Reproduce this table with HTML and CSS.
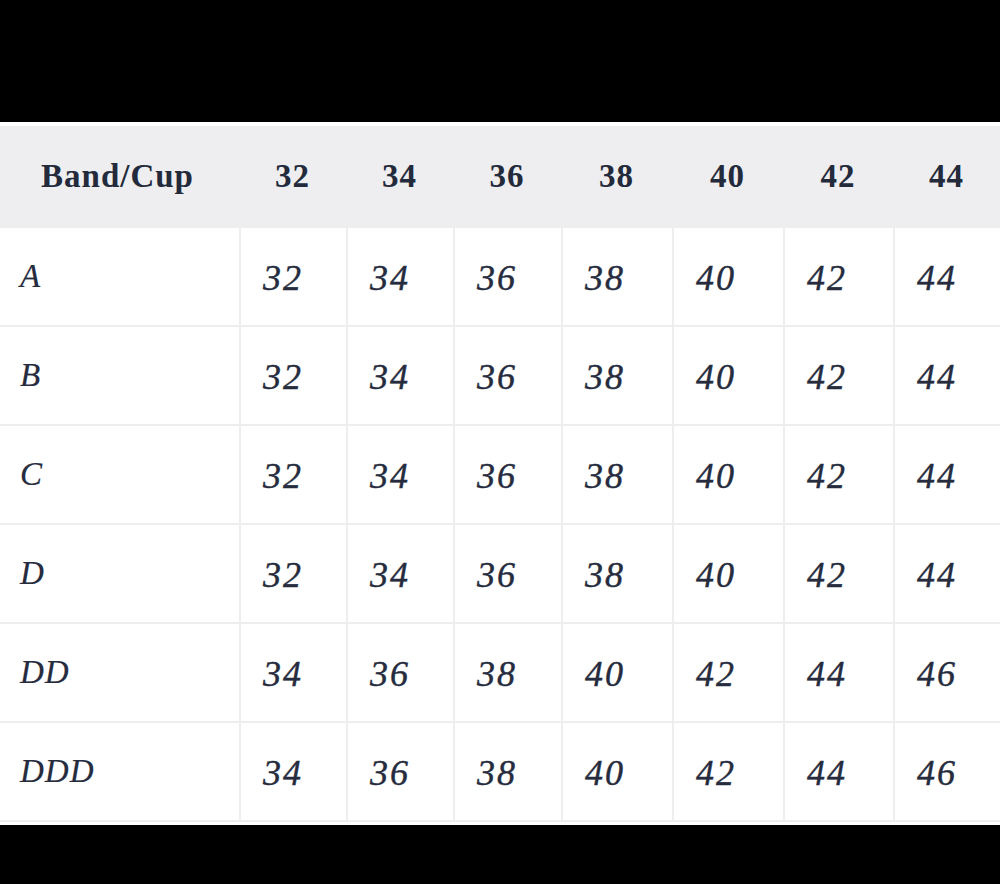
FILE: index.html
```html
<!DOCTYPE html>
<html lang="en">
<head>
<meta charset="utf-8">
<title>Band/Cup size chart</title>
<link rel="stylesheet" href="styles.css">
</head>
<body>
<div class="sheet">
  <div class="chart" role="table">
    <div class="hd first">Band/Cup</div>
    <div class="hd">32</div>
    <div class="hd">34</div>
    <div class="hd">36</div>
    <div class="hd">38</div>
    <div class="hd">40</div>
    <div class="hd">42</div>
    <div class="hd">44</div>

    <div class="cell label">A</div>
    <div class="cell">32</div><div class="cell">34</div><div class="cell">36</div><div class="cell">38</div><div class="cell">40</div><div class="cell">42</div><div class="cell">44</div>

    <div class="cell label">B</div>
    <div class="cell">32</div><div class="cell">34</div><div class="cell">36</div><div class="cell">38</div><div class="cell">40</div><div class="cell">42</div><div class="cell">44</div>

    <div class="cell label">C</div>
    <div class="cell">32</div><div class="cell">34</div><div class="cell">36</div><div class="cell">38</div><div class="cell">40</div><div class="cell">42</div><div class="cell">44</div>

    <div class="cell label">D</div>
    <div class="cell">32</div><div class="cell">34</div><div class="cell">36</div><div class="cell">38</div><div class="cell">40</div><div class="cell">42</div><div class="cell">44</div>

    <div class="cell label">DD</div>
    <div class="cell">34</div><div class="cell">36</div><div class="cell">38</div><div class="cell">40</div><div class="cell">42</div><div class="cell">44</div><div class="cell">46</div>

    <div class="cell label last">DDD</div>
    <div class="cell last">34</div><div class="cell last">36</div><div class="cell last">38</div><div class="cell last">40</div><div class="cell last">42</div><div class="cell last">44</div><div class="cell last">46</div>
  </div>
</div>
</body>
</html>
```
FILE: styles.css
```css
html, body {
  margin: 0;
  background: #000;
}

.sheet {
  margin-top: 122px;
  background: #fff;
  padding: 4px 0 3px;
}

.chart {
  display: grid;
  grid-template-columns: 239px 107px 107px 108px 111px 111px 110px 107px;
  color: #262c3e;
}

.hd {
  height: 100px;
  background: #eeeef0;
  display: flex;
  align-items: center;
  justify-content: center;
  font-family: "Liberation Serif", "Times New Roman", serif;
  font-weight: bold;
  font-size: 33px;
  letter-spacing: 1px;
  color: #232a3b;
}

.hd.first {
  padding-right: 4px;
}

.cell {
  box-sizing: border-box;
  height: 99px;
  border-top: 2px solid #eeeeee;
  border-left: 2px solid #eeeeee;
  display: flex;
  align-items: center;
  padding-left: 22px;
  padding-top: 2px;
  font-family: "Liberation Serif", "Times New Roman", serif;
  font-style: italic;
  font-size: 36px;
  letter-spacing: 2px;
  -webkit-text-stroke: 0.4px #262c3e;
}

.cell.label {
  border-left: none;
  padding-left: 20px;
  padding-top: 0;
  font-size: 33px;
  letter-spacing: 1px;
  -webkit-text-stroke: 0.2px #262c3e;
}

.cell.last {
  height: 101px;
  border-bottom: 2px solid #eeeeee;
}
```
